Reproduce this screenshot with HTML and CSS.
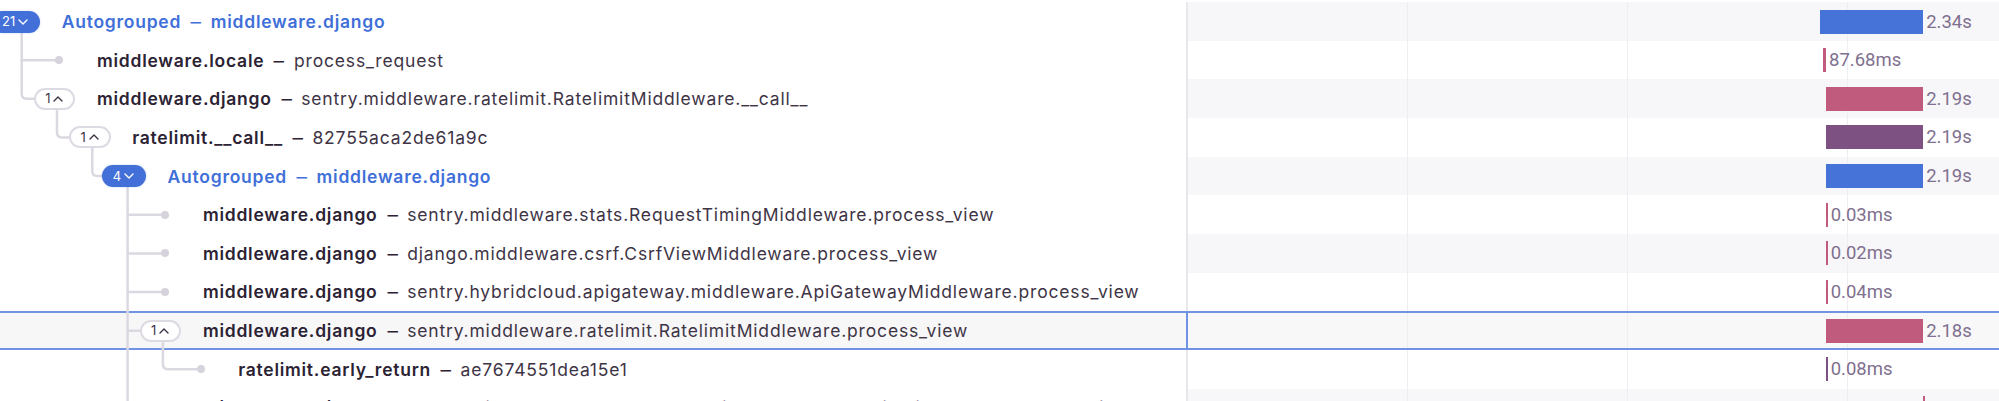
FILE: index.html
```html
<!DOCTYPE html>
<html lang="en">
<head>
<meta charset="utf-8">
<title>Trace waterfall</title>
<link rel="stylesheet" href="styles.css">
</head>
<body>
<div class="trace">
  <svg class="tree-lines" width="1186" height="430" viewBox="0 0 1186 430" aria-hidden="true">
    <g fill="none" stroke="#dcd8e1" stroke-width="2.5" stroke-linecap="round">
      <path d="M21.7 32 V93.8 Q21.7 98.8 26.7 98.8 H34"/>
      <path d="M21.7 60.15 H58"/>
      <path d="M57 109 V132.45 Q57 137.45 62 137.45 H69"/>
      <path d="M92.3 148 V171.1 Q92.3 176.1 97.3 176.1 H104"/>
      <path d="M127.6 187 V430"/>
      <path d="M127.6 214.75 H164"/>
      <path d="M127.6 253.4 H164"/>
      <path d="M127.6 292.05 H164"/>
      <path d="M127.6 330.7 H140"/>
      <path d="M162.9 341 V364.35 Q162.9 369.35 167.9 369.35 H199"/>
    </g>
  </svg>

  <div class="row stripe">
    <div class="cell-left d0">
      <div class="slot"><span class="badge solid">21<svg class="chev" viewBox="0 0 10 6"><path d="M1 1 L5 5 L9 1"/></svg></span></div>
      <div class="title group"><span class="op">Autogrouped</span><span class="sep"> — </span><span class="op">middleware.django</span></div>
    </div>
    <div class="cell-right"><span class="bar blue" style="margin-left:631.7px;width:103.5px"></span><span class="dur">2.34s</span></div>
  </div>

  <div class="row">
    <div class="cell-left d1">
      <div class="slot leaf"><span class="dot"></span></div>
      <div class="title"><span class="op">middleware.locale</span><span class="sep"> — </span><span class="desc">process_request</span></div>
    </div>
    <div class="cell-right"><span class="bar pink" style="margin-left:635px;width:3px"></span><span class="dur">87.68ms</span></div>
  </div>

  <div class="row stripe">
    <div class="cell-left d1">
      <div class="slot"><span class="badge outline">1<svg class="chev" viewBox="0 0 10 6"><path d="M1 5 L5 1 L9 5"/></svg></span></div>
      <div class="title"><span class="op">middleware.django</span><span class="sep"> — </span><span class="desc">sentry.middleware.ratelimit.RatelimitMiddleware.__call__</span></div>
    </div>
    <div class="cell-right"><span class="bar pink" style="margin-left:637.7px;width:97.5px"></span><span class="dur">2.19s</span></div>
  </div>

  <div class="row">
    <div class="cell-left d2">
      <div class="slot"><span class="badge outline">1<svg class="chev" viewBox="0 0 10 6"><path d="M1 5 L5 1 L9 5"/></svg></span></div>
      <div class="title"><span class="op">ratelimit.__call__</span><span class="sep"> — </span><span class="desc">82755aca2de61a9c</span></div>
    </div>
    <div class="cell-right"><span class="bar purple" style="margin-left:637.7px;width:97.5px"></span><span class="dur">2.19s</span></div>
  </div>

  <div class="row stripe">
    <div class="cell-left d3">
      <div class="slot"><span class="badge solid">4<svg class="chev" viewBox="0 0 10 6"><path d="M1 1 L5 5 L9 1"/></svg></span></div>
      <div class="title group"><span class="op">Autogrouped</span><span class="sep"> — </span><span class="op">middleware.django</span></div>
    </div>
    <div class="cell-right"><span class="bar blue" style="margin-left:637.7px;width:97.5px"></span><span class="dur">2.19s</span></div>
  </div>

  <div class="row">
    <div class="cell-left d4">
      <div class="slot leaf"><span class="dot"></span></div>
      <div class="title"><span class="op">middleware.django</span><span class="sep"> — </span><span class="desc">sentry.middleware.stats.RequestTimingMiddleware.process_view</span></div>
    </div>
    <div class="cell-right"><span class="bar pink" style="margin-left:637.7px;width:2px"></span><span class="dur">0.03ms</span></div>
  </div>

  <div class="row stripe">
    <div class="cell-left d4">
      <div class="slot leaf"><span class="dot"></span></div>
      <div class="title"><span class="op">middleware.django</span><span class="sep"> — </span><span class="desc">django.middleware.csrf.CsrfViewMiddleware.process_view</span></div>
    </div>
    <div class="cell-right"><span class="bar pink" style="margin-left:637.7px;width:2px"></span><span class="dur">0.02ms</span></div>
  </div>

  <div class="row">
    <div class="cell-left d4">
      <div class="slot leaf"><span class="dot"></span></div>
      <div class="title"><span class="op">middleware.django</span><span class="sep"> — </span><span class="desc">sentry.hybridcloud.apigateway.middleware.ApiGatewayMiddleware.process_view</span></div>
    </div>
    <div class="cell-right"><span class="bar pink" style="margin-left:637.7px;width:2px"></span><span class="dur">0.04ms</span></div>
  </div>

  <div class="row selected">
    <div class="cell-left d4">
      <div class="slot"><span class="badge outline">1<svg class="chev" viewBox="0 0 10 6"><path d="M1 5 L5 1 L9 5"/></svg></span></div>
      <div class="title"><span class="op">middleware.django</span><span class="sep"> — </span><span class="desc">sentry.middleware.ratelimit.RatelimitMiddleware.process_view</span></div>
    </div>
    <div class="cell-right"><span class="bar pink" style="margin-left:637.7px;width:97.5px"></span><span class="dur">2.18s</span></div>
  </div>

  <div class="row">
    <div class="cell-left d5">
      <div class="slot leaf"><span class="dot"></span></div>
      <div class="title"><span class="op">ratelimit.early_return</span><span class="sep"> — </span><span class="desc">ae7674551dea15e1</span></div>
    </div>
    <div class="cell-right"><span class="bar purple" style="margin-left:637.7px;width:2px"></span><span class="dur">0.08ms</span></div>
  </div>

  <div class="row stripe">
    <div class="cell-left d4">
      <div class="slot leaf"><span class="dot"></span></div>
      <div class="title"><span class="op">middleware.django</span><span class="sep"> — </span><span class="desc">sentry.middleware.customer_domain.CustomerDomainMiddleware.process_view</span></div>
    </div>
    <div class="cell-right"><span class="bar pink" style="margin-left:734.5px;width:2px"></span><span class="dur">0.01ms</span></div>
  </div>
</div>
</body>
</html>
```
FILE: styles.css
```css
* { box-sizing: border-box; }

html, body {
  margin: 0;
  padding: 0;
  background: #ffffff;
  overflow: hidden;
}

body {
  width: 1999px;
  height: 401px;
  font-family: Inter, "Noto Sans", sans-serif;
  color: #2b2233;
}

.trace {
  position: relative;
  padding-top: 2.2px;
}

.tree-lines {
  position: absolute;
  left: 0;
  top: 0;
  z-index: 0;
  pointer-events: none;
}

.row {
  display: flex;
  height: 38.65px;
}

.cell-left {
  width: 1186px;
  flex: none;
  display: flex;
  align-items: center;
  white-space: nowrap;
}

.d0 { padding-left: 0; }
.d1 { padding-left: 35.3px; }
.d2 { padding-left: 70.6px; }
.d3 { padding-left: 105.9px; }
.d4 { padding-left: 141.2px; }
.d5 { padding-left: 176.5px; }

.slot {
  width: 61.7px;
  flex: none;
  display: flex;
  justify-content: flex-end;
  align-items: center;
  padding-right: 21.5px;
}

.slot.leaf {
  padding-right: 33.5px;
}

.dot {
  position: relative;
  z-index: 1;
  width: 8px;
  height: 8px;
  border-radius: 50%;
  background: #d7d3dc;
  flex: none;
}

.badge {
  position: relative;
  z-index: 1;
  flex: none;
  display: inline-flex;
  align-items: center;
  gap: 3px;
  height: 22px;
  border-radius: 11px;
  padding: 0 12px 0 11px;
  font-size: 13px;
  line-height: 1;
  white-space: nowrap;
}

.badge.solid {
  background: #4270d8;
  color: #ffffff;
  box-shadow: 0 0 2px rgba(66, 112, 216, 0.35);
}

.badge.outline {
  background: #ffffff;
  color: #3e3446;
  border: 2px solid #dedae3;
  padding: 0 10px 0 9px;
}

.chev {
  width: 10px;
  height: 6px;
  fill: none;
  stroke: currentColor;
  stroke-width: 1.4;
  stroke-linecap: round;
  stroke-linejoin: round;
}

.title {
  font-size: 17.5px;
  color: #3e3446;
  white-space: nowrap;
}

.op {
  font-weight: 600;
  letter-spacing: 0.75px;
  color: #2b2233;
}

.title.group .op {
  color: #3f6fd8;
}

.sep {
  display: inline-block;
  width: 29.6px;
  text-align: center;
  transform: scaleX(0.6);
  color: #2b2233;
}

.title.group .sep {
  color: #3f6fd8;
}

.desc {
  font-weight: 400;
  letter-spacing: 0.83px;
  color: #3e3446;
}

.cell-right {
  flex: 1;
  display: flex;
  align-items: center;
  border-left: 2px solid #e9e6ec;
  background-image: repeating-linear-gradient(to right, transparent 0, transparent 219px, #efedf2 219px, #efedf2 220px);
}

.stripe .cell-right {
  background-color: #f7f6f9;
}

.selected .cell-left {
  background-color: #f7f7f8;
  box-shadow: inset 0 2px 0 #7093e3, inset 0 -2px 0 #7093e3;
}

.selected .cell-right {
  background-color: #f8f8f9;
  border-left-color: #7093e3;
  box-shadow: inset 0 2px 0 #7093e3, inset 0 -2px 0 #7093e3;
}

.bar {
  flex: none;
  height: 24px;
}

.bar.blue { background: #4673d7; }
.bar.pink { background: #c05b7d; }
.bar.purple { background: #7e5183; }

.dur {
  margin-left: 3px;
  font-family: Roboto, "Liberation Sans", sans-serif;
  font-size: 18.5px;
  color: #80708f;
  white-space: nowrap;
}
```
